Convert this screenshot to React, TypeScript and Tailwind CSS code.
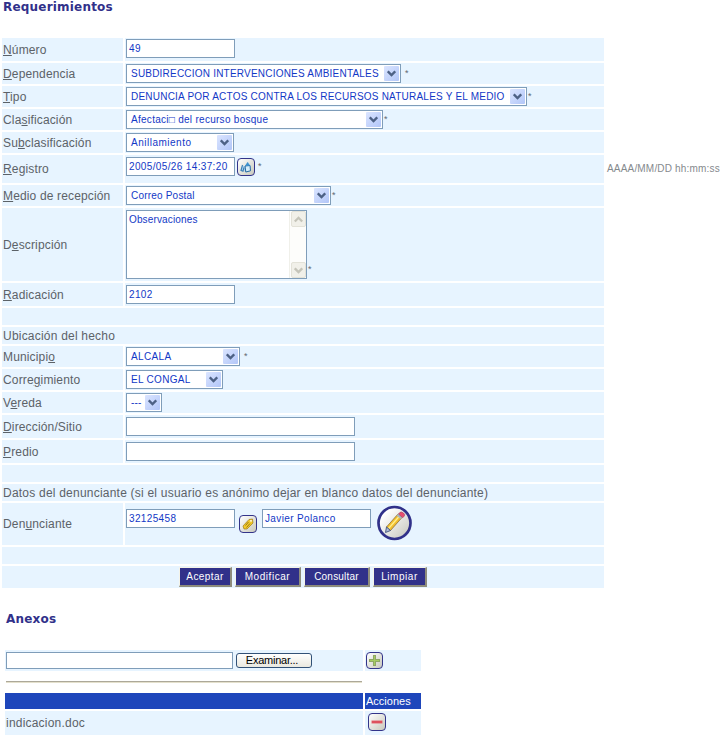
import type { ReactNode } from "react";

const ROW = "flex gap-[2px]";
const BG = "bg-[#e7f4ff]";

function Label({ text, hot }: { text: string; hot: number }) {
  return (
    <div className={`flex w-[121px] shrink-0 items-center ${BG} pl-px`}>
      <label className="whitespace-nowrap text-[12px] leading-none tracking-[0.15px]">
        {text.slice(0, hot)}
        <span className="underline decoration-1 underline-offset-1">{text[hot]}</span>
        {text.slice(hot + 1)}
      </label>
    </div>
  );
}

function Row({ label, hot, height, children }: { label: string; hot: number; height: string; children: ReactNode }) {
  return (
    <div className={`${ROW} ${height}`}>
      <Label text={label} hot={hot} />
      <div className={`flex grow items-start ${BG} pl-px pt-px`}>{children}</div>
    </div>
  );
}

function Star({ className = "" }: { className?: string }) {
  return <span className={`text-[9px] leading-none text-[#606870] ${className}`}>*</span>;
}

function Chevron({ up = false, color = "#4d6185" }: { up?: boolean; color?: string }) {
  return (
    <svg width="9" height="7" viewBox="0 0 9 7" fill="none" stroke={color} strokeWidth="2.3">
      <path d={up ? "M0.8 5.5 4.5 1.8 8.2 5.5" : "M0.8 1.3 4.5 5 8.2 1.3"} />
    </svg>
  );
}

function Select({ value, width, track = "tracking-[0.22px]" }: { value: string; width: string; track?: string }) {
  return (
    <div className={`flex h-[19px] items-center justify-between border border-[#7f9db9] bg-white pl-1 pr-px ${width}`}>
      <span className={`whitespace-nowrap text-[10px] leading-none text-[#1238c6] ${track}`}>{value}</span>
      <span className="flex h-[15px] w-[15px] shrink-0 items-center justify-center rounded-[1px] bg-linear-to-br from-[#dbe5ff] to-[#b2c6f8]">
        <Chevron />
      </span>
    </div>
  );
}

function Field({ value = "", width = "w-[109px]", track = "tracking-[0.36px]" }: { value?: string; width?: string; track?: string }) {
  return (
    <div className={`flex h-[19px] items-center border border-[#7f9db9] bg-white pl-0.5 ${width}`}>
      <span className={`whitespace-nowrap text-[10px] leading-none text-[#1238c6] ${track}`}>{value}</span>
    </div>
  );
}

function IconBox({ size, children }: { size: string; children: ReactNode }) {
  return (
    <span className={`flex items-center justify-center rounded-[4px] border-[1.5px] border-[#33348a] bg-linear-to-br from-white to-[#c9c9bd] ${size}`}>
      {children}
    </span>
  );
}

function Button({ text, width, track = "tracking-[0.55px]" }: { text: string; width: string; track?: string }) {
  return (
    <button className={`flex h-[20px] items-center justify-center border-t border-r-2 border-b-2 border-l border-t-[#f4f3e8] border-l-[#f4f3e8] border-r-[#8e8c7c] border-b-[#8e8c7c] bg-[#31318a] text-[10px] leading-none text-white ${width} ${track}`}>
      <span className="mt-px whitespace-nowrap">{text}</span>
    </button>
  );
}

function ScrollButton({ up = false }: { up?: boolean }) {
  return (
    <span className="flex h-4 w-[15px] items-center justify-center rounded-[2px] border border-[#e3e2d8] bg-[#f1f0e9]">
      <Chevron up={up} color="#c5c4b9" />
    </span>
  );
}

export default function App() {
  return (
    <div className="h-[739px] w-[723px] overflow-hidden bg-white font-['Liberation_Sans',Arial,sans-serif] text-[#5c6268]">
      <h1 className="h-[38px] pl-[3px] text-[12px] leading-[15px] font-bold tracking-[0.2px] text-[#31318a] font-['DejaVu_Sans',sans-serif]">Requerimientos</h1>
      <div className="flex">
        <div className="ml-[2px] flex w-[602px] flex-col gap-[2px]">
          <Row label="Número" hot={0} height="h-[23px]"><Field value="49" /></Row>
          <Row label="Dependencia" hot={0} height="h-[21px]">
            <Select value="SUBDIRECCION INTERVENCIONES AMBIENTALES" width="w-[275px]" track="tracking-[0.21px]" />
            <Star className="ml-[4px] mt-[5px]" />
          </Row>
          <Row label="Tipo" hot={0} height="h-[21px]">
            <Select value="DENUNCIA POR ACTOS CONTRA LOS RECURSOS NATURALES Y EL MEDIO" width="w-[401px]" />
            <Star className="ml-[1px] mt-[5px]" />
          </Row>
          <Row label="Clasificación" hot={3} height="h-[21px]">
            <Select value="Afectaci□ del recurso bosque" width="w-[257px]" track="tracking-[0.28px]" />
            <Star className="ml-[1px] mt-[5px]" />
          </Row>
          <Row label="Subclasificación" hot={2} height="h-[21px]"><Select value="Anillamiento" width="w-[108px]" track="tracking-[0.5px]" /></Row>
          <Row label="Registro" hot={0} height="h-[28px]">
            <div className="mt-px"><Field value="2005/05/26 14:37:20" /></div>
            <div className="ml-[2px] mt-[2px]">
              <IconBox size="h-[18px] w-[18px]">
                <svg width="14" height="14" viewBox="0 0 14 14">
                  <path d="M1.5 10.5 3.5 5l2 1.500L9 2l3 4.500-1 5-4.500 1-1.500-2.500-1.500 1.500Z" fill="#a9d1ee" />
                  <path d="m6 6 .8 6 4.700-1.200L11 5.500Z" fill="#d3ecfa" stroke="#28699f" strokeWidth="1" />
                  <path d="M3.500 5 2 10.500l2 .8L5 7.500" fill="none" stroke="#3a7db2" strokeWidth="1.100" />
                  <path d="m6 6 2.500-4L11 5.500Z" fill="#3d91ce" />
                </svg>
              </IconBox>
            </div>
            <Star className="ml-[3px] mt-[6px]" />
          </Row>
          <Row label="Medio de recepción" hot={0} height="h-[21px]">
            <Select value="Correo Postal" width="w-[205px]" track="tracking-[0.2px]" />
            <Star className="ml-[1px] mt-[5px]" />
          </Row>
          <Row label="Descripción" hot={1} height="h-[73px]">
            <div className="mt-px flex h-[69px] w-[181px] justify-between border border-[#7f9db9] bg-white">
              <span className="pl-0.5 pt-[3px] text-[10px] leading-[11px] tracking-[0.14px] text-[#1238c6]">Observaciones</span>
              <span className="flex w-[17px] flex-col items-center justify-between border-l border-[#f0f0ea] bg-[#fdfdfb]">
                <ScrollButton up />
                <ScrollButton />
              </span>
            </div>
            <Star className="ml-[1px] mt-[56px]" />
          </Row>
          <Row label="Radicación" hot={0} height="h-[23px]"><div className="mt-px"><Field value="2102" /></div></Row>
          <div className={`h-[17px] ${BG}`} />
          <div className={`flex h-[17px] items-center pl-px text-[12px] leading-none tracking-[0.21px] ${BG}`}>Ubicación del hecho</div>
          <Row label="Municipio" hot={8} height="h-[21px]">
            <Select value="ALCALA" width="w-[114px]" track="tracking-[0.35px]" />
            <Star className="ml-[4px] mt-[5px]" />
          </Row>
          <Row label="Corregimiento" hot={5} height="h-[21px]"><Select value="EL CONGAL" width="w-[97px]" track="tracking-[0.3px]" /></Row>
          <Row label="Vereda" hot={1} height="h-[21px]"><Select value="---" width="w-[36px]" /></Row>
          <Row label="Dirección/Sitio" hot={0} height="h-[23px]"><div className="mt-px"><Field width="w-[229px]" /></div></Row>
          <Row label="Predio" hot={0} height="h-[23px]"><div className="mt-px"><Field width="w-[229px]" /></div></Row>
          <div className={`h-[17px] ${BG}`} />
          <div className={`flex h-[17px] items-center whitespace-nowrap pl-px text-[12px] leading-none tracking-[0.22px] ${BG}`}>
            Datos del denunciante (si el usuario es anónimo dejar en blanco datos del denunciante)
          </div>
          <Row label="Denunciante" hot={3} height="h-[42px]">
            <div className="mt-[5px]"><Field value="32125458" /></div>
            <div className="ml-[4px] mt-[11px]">
              <IconBox size="h-[18px] w-[18px]">
                <svg width="14" height="14" viewBox="0 0 14 14">
                  <path d="M2 9 8 2.500l3.500-.5.5 4L6 12H3Z" fill="#f3c928" stroke="#9b7a1b" strokeWidth=".7" />
                  <path d="m4.500 8.500 3-3.500M5.500 10.500l3.500-4" stroke="#806514" strokeWidth=".8" />
                  <circle cx="10" cy="3.800" r=".9" fill="#fff" />
                </svg>
              </IconBox>
            </div>
            <div className="ml-[5px] mt-[5px]"><Field value="Javier Polanco" /></div>
            <svg className="ml-[6px] mt-[1px]" width="36" height="36" viewBox="0 0 36 36">
              <defs>
                <linearGradient id="disc" x1="0" y1="0" x2="1" y2="1">
                  <stop offset=".2" stopColor="#fff" />
                  <stop offset="1" stopColor="#c3c3b9" />
                </linearGradient>
              </defs>
              <circle cx="17.500" cy="18" r="16" fill="url(#disc)" stroke="#31318a" strokeWidth="2.700" />
              <path d="m9.500 22 11.500-13 4 3.500-11.500 13Z" fill="#f3bf2d" stroke="#8c7038" strokeWidth=".8" />
              <path d="m11.500 23.500 11.500-13" stroke="#fff08b" strokeWidth="1.300" />
              <path d="m9.500 22-1 5.500 5-2Z" fill="#aebbd8" stroke="#42517d" strokeWidth=".9" />
              <path d="m19.500 10.500 2-2 4 3.500-2 2Z" fill="#a9b5bb" />
              <path d="m21.500 9 1.500-1.700q1.500-1 3.500.7t.8 3l-1.600 1.800Z" fill="#e84d70" stroke="#9b4256" strokeWidth=".6" />
            </svg>
          </Row>
          <div className={`h-[17px] ${BG}`} />
          <div className={`flex h-[22px] gap-[3px] pl-[177px] pt-px ${BG}`}>
            <Button text="Aceptar" width="w-[53px]" track="tracking-[0.4px]" />
            <Button text="Modificar" width="w-[66px]" />
            <Button text="Consultar" width="w-[66px]" track="tracking-[0.2px]" />
            <Button text="Limpiar" width="w-[54px]" />
          </div>
        </div>
        <span className="ml-[3px] mt-[126px] whitespace-nowrap text-[10px] leading-[10px] tracking-[0.18px] text-[#85898d]">AAAA/MM/DD hh:mm:ss</span>
      </div>
      <h2 className="mt-[22px] h-[40px] pl-[6px] text-[12px] leading-[19px] font-bold tracking-[0.2px] text-[#31318a] font-['DejaVu_Sans',sans-serif]">Anexos</h2>
      <div className="ml-[5px] w-[416px]">
        <div className="flex h-[21px] gap-[2px]">
          <div className={`flex w-[358px] items-start pl-px pt-[2px] ${BG}`}>
            <div className="h-[17px] w-[227px] border border-[#7f9db9] bg-white" />
            <button className="ml-[3px] mt-px flex h-[15px] w-[76px] items-center justify-center rounded-[3px] border border-[#315177] bg-linear-to-b from-white to-[#e9e8df] text-[11px] leading-none tracking-[-0.25px] text-black"><span className="-ml-1">Examinar...</span></button>
          </div>
          <div className={`w-[56px] pl-[1px] pt-[2px] ${BG}`}>
            <IconBox size="h-[17px] w-[17px]">
              <svg width="11" height="11" viewBox="0 0 11 11"><path d="M5.500 0v11M0 5.500h11" stroke="#8fa765" strokeWidth="3" /><path d="M5.500 1v9M1 5.500h9" stroke="#a5cb62" /></svg>
            </IconBox>
          </div>
        </div>
        <div className="ml-px mt-[10px] h-[2px] w-[356px] border-t border-b border-t-[#aca899] border-b-[#e4e0cc]" />
        <div className="mt-[10px] flex h-[16px] gap-[2px]">
          <div className="w-[358px] bg-[#1e46bb]" />
          <div className="flex w-[56px] items-center whitespace-nowrap bg-[#1e46bb] pl-px text-[11px] leading-none text-white">Acciones</div>
        </div>
        <div className="mt-[2px] flex h-[24px] gap-[2px]">
          <div className={`flex w-[358px] items-center pl-px text-[12px] leading-none tracking-[0.21px] ${BG}`}>indicacion.doc</div>
          <div className={`w-[56px] pl-[3px] pt-[2px] ${BG}`}>
            <IconBox size="h-[18px] w-[18px]">
              <svg width="12" height="4" viewBox="0 0 12 4"><rect x=".5" y=".5" width="11" height="3" fill="#e46a72" /><path d="M1 2h10" stroke="#d73848" /></svg>
            </IconBox>
          </div>
        </div>
      </div>
    </div>
  );
}
